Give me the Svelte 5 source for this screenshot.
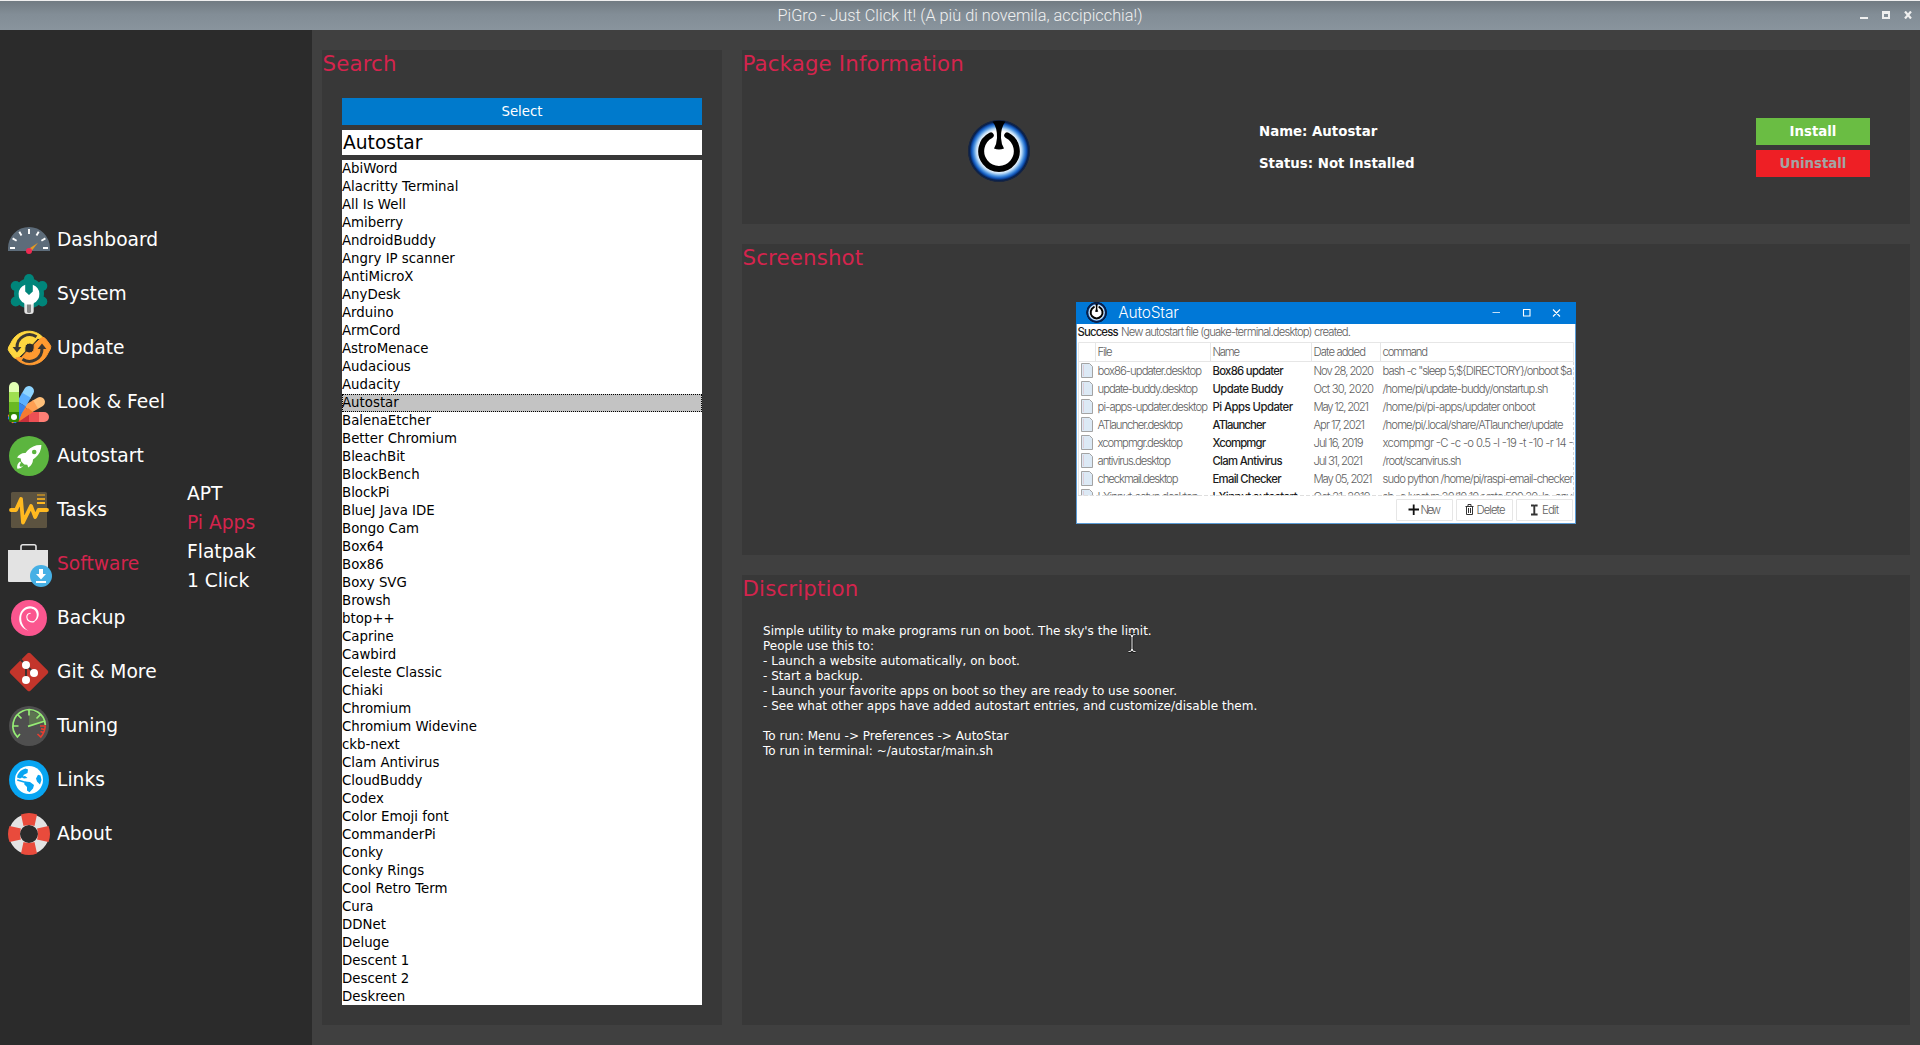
<script>
  const nav = ['Dashboard', 'System', 'Update', 'Look & Feel', 'Autostart', 'Tasks', 'Software', 'Backup', 'Git & More', 'Tuning', 'Links', 'About'];
  const sub = ['APT', 'Pi Apps', 'Flatpak', '1 Click'];
  const apps = ['AbiWord', 'Alacritty Terminal', 'All Is Well', 'Amiberry', 'AndroidBuddy', 'Angry IP scanner', 'AntiMicroX', 'AnyDesk', 'Arduino', 'ArmCord', 'AstroMenace', 'Audacious', 'Audacity', 'Autostar', 'BalenaEtcher', 'Better Chromium', 'BleachBit', 'BlockBench', 'BlockPi', 'BlueJ Java IDE', 'Bongo Cam', 'Box64', 'Box86', 'Boxy SVG', 'Browsh', 'btop++', 'Caprine', 'Cawbird', 'Celeste Classic', 'Chiaki', 'Chromium', 'Chromium Widevine', 'ckb-next', 'Clam Antivirus', 'CloudBuddy', 'Codex', 'Color Emoji font', 'CommanderPi', 'Conky', 'Conky Rings', 'Cool Retro Term', 'Cura', 'DDNet', 'Deluge', 'Descent 1', 'Descent 2', 'Deskreen'];
  const description = `Simple utility to make programs run on boot. The sky's the limit.
People use this to:
- Launch a website automatically, on boot.
- Start a backup.
- Launch your favorite apps on boot so they are ready to use sooner.
- See what other apps have added autostart entries, and customize/disable them.

To run: Menu -> Preferences -> AutoStar
To run in terminal: ~/autostar/main.sh`;

  // Each cell of the preview table: text and its drawn width.
  const rows = [
    [['box86-updater.desktop', 104.5], ['Box86 updater', 71], ['Nov 28, 2020', 60.5], ['bash -c "sleep 5;${DIRECTORY}/onboot $a', 190]],
    [['update-buddy.desktop', 100.5], ['Update Buddy', 71], ['Oct 30, 2020', 60.5], ['/home/pi/update-buddy/onstartup.sh', 166]],
    [['pi-apps-updater.desktop', 110.5], ['Pi Apps Updater', 80.5], ['May 12, 2021', 55.5], ['/home/pi/pi-apps/updater onboot', 153]],
    [['ATlauncher.desktop', 85.5], ['ATlauncher', 53.5], ['Apr 17, 2021', 51.5], ['/home/pi/.local/share/ATlauncher/update', 181]],
    [['xcompmgr.desktop', 85.5], ['Xcompmgr', 53.5], ['Jul 16, 2019', 50], ['xcompmgr -C -c -o 0.5 -l -19 -t -10 -r 14 -', 191]],
    [['antivirus.desktop', 73.5], ['Clam Antivirus', 70], ['Jul 31, 2021', 49.5], ['/root/scanvirus.sh', 79]],
    [['checkmail.desktop', 81], ['Email Checker', 69], ['May 05, 2021', 59], ['sudo python /home/pi/raspi-email-checker', 191]],
    [['LXinput-setup.desktop', 101], ['LXinput autostart', 85], ['Oct 21, 2019', 57], ["sh -c 'xset m 20/10 10 r rate 500 20; ls -any", 190]],
  ];
  const cols = [21.5, 136.5, 237.5, 306.5];
  const strips = [
    [90, '#c1272d', '#c9303a', '#ed5054', '#ff7f75'],
    [60, '#f57a30', '#f9803a', '#ff9f52', '#ffc07a'],
    [30, '#2f7fe6', '#3885ea', '#5cb0ff', '#8ed4ff'],
    [0, '#2f8500', '#6ab923', '#9fdf50', '#e2ffb4'],
  ];
</script>

{#snippet power()}
  <circle cx="32" cy="32" r="31.5" fill="url(#glow)" />
  <path d="M23.8 16.3A17.8 17.8 0 1 0 40.2 16.3" fill="none" stroke="#000" stroke-width="6" stroke-linecap="round" />
  <path d="M25.5 2.5Q32 1 38.5 2.5Q33.5 9 34 19Q34.3 25 37 29.5Q32 31.5 27 29.5Q29.7 25 30 19Q30.5 9 25.5 2.5Z" fill="#000" />
{/snippet}

{#snippet icon(name)}
  <svg class="icon" viewBox="0 0 48 48">
    {#if name === 'Dashboard'}
      <path d="M3 35v-3a21 21 0 0 1 42 0v3z" fill="#5d6c7a" />
      <path d="M24 13v5M14.3 15.8l2.2 3.8M33.7 15.8l-2.2 3.8M7.6 22.4l4 2.3M40.4 22.4l-4 2.3M5 32h5M38 32h5" stroke="#fff" stroke-width="1.9" />
      <path d="M22.8 33.5L33 26.8L25.6 36.2z" fill="#e49a22" />
      <circle cx="24" cy="35" r="3" fill="#ef2a52" />
    {:else if name === 'System'}
      <g fill="#00857a">
        <circle cx="24" cy="23.5" r="15" />
        <circle cx="24" cy="9" r="5" /><circle cx="10.7" cy="16" r="5" /><circle cx="37.3" cy="16" r="5" />
        <circle cx="10.7" cy="31.5" r="5" /><circle cx="37.3" cy="31.5" r="5" />
      </g>
      <path d="M19.3 33h9.4v8a3 3 0 0 1-3 3h-3.4a3 3 0 0 1-3-3z" fill="#e3e3e3" />
      <path d="M22 33h4v8.500a2 1.500 0 0 1-4 0z" fill="#858585" />
      <path d="M20.200 14.800V21.500l3.800 3.500l3.800-3.500V14.800A10 10 0 0 1 28.500 33.300Q28.500 34.500 27 34.500H21Q19.500 34.500 19.500 33.300A10 10 0 0 1 20.200 14.800z" fill="#fff" />
    {:else if name === 'Update'}
      {#each [['#ffd740', 0], ['#ff9a30', 180]] as u}
        <g transform="rotate({u[1]} 24.500 24)">
          <path d="M38.500 14A19.300 19.300 0 0 0 6 19L3.700 23Q2.300 25.500 4.500 28L8.500 33.300Q11 36 13.500 33.300L19.800 27.500V24A4.800 4.800 0 0 1 27.500 20L32.500 14.500z" fill={u[0]} stroke={u[0]} stroke-linejoin="round" />
          <path d="M31.500 12.800A12.500 12.500 0 0 0 12 23.500" fill="none" stroke="#3a3732" stroke-width="3" />
          <path d="M7.600 23H16.400L12 28.500z" fill="#3a3732" />
        </g>
      {/each}
    {:else if name === 'Look & Feel'}
      {#each strips as s}
        <g transform="rotate({s[0]} 9 39)">
          <path d="M4 15V9a5 5 0 0 1 10 0v6z" fill={s[4]} />
          <path d="M4 14h10v10H4z" fill={s[3]} />
          <path d="M4 24h10v10H4z" fill={s[2]} />
          <path d="M4 34h10v8a2 2 0 0 1-2 2H6a2 2 0 0 1-2-2z" fill={s[1]} />
        </g>
      {/each}
      <path d="M14 34h3l-3 9z" fill="#2f7fe6" />
      <path d="M17 35l6-5 5 4-14 9.500z" fill="#f57a30" />
      <circle cx="9" cy="39" r="3" fill="#fff" />
    {:else if name === 'Autostart'}
      <circle cx="24" cy="24" r="20" fill="#5cb53f" />
      <path d="M36.400 12.900Q28 12.500 22.300 18.800L20.500 21Q15.500 20.500 12 25.500L15.800 26.500L16.200 29.500L19.300 32.500L22.300 32.800L23.200 35.500Q28 32.500 28 27.500L30.500 25.500Q36.500 20 36.400 12.900z" fill="#fff" />
      <circle cx="29.200" cy="20" r="2.300" fill="#5cb53f" />
      <path d="M15 29.500Q11.500 32 12.200 36.600Q16 37 18.700 33.500Q16.200 35 15.200 34.600Q13.800 33.500 16 30.500z" fill="#fff" />
    {:else if name === 'Tasks'}
      <rect x="6" y="6" width="36" height="36" rx="1.500" fill="#5c5340" />
      <path d="M32 9h8" stroke="#ad822b" stroke-width="2" />
      <path d="M32 13h8" stroke="#dda226" stroke-width="2" />
      <path d="M32 17h8" stroke="#ffb820" stroke-width="2" />
      <path d="M6 24H11L16 13L18 36.500L26 20L30.200 31L33.500 24H42" fill="none" stroke="#ffb920" stroke-width="3.800" stroke-linejoin="round" stroke-linecap="round" />
    {:else if name === 'Software'}
      <path d="M16 11V6.500a1.700 1.700 0 0 1 1.700-1.700h11.600A1.700 1.700 0 0 1 31 6.500V11" fill="none" stroke="#e4e4e4" stroke-width="1.600" />
      <path d="M3 10h40v31a1 1 0 0 1-1 1H4a1 1 0 0 1-1-1z" fill="#e3e3e3" />
      <circle cx="36" cy="36" r="11" fill="#46b0e5" />
      <path d="M34 29h4v5h3l-5 5.500l-5-5.500h3zM31 41h10v2H31z" fill="#fff" />
    {:else if name === 'Backup'}
      <circle cx="24" cy="24" r="18" fill="#fb568f" />
      <path d="M23.500 36.800C16.500 34.500 13.500 29 14.300 23C15.300 16.500 19.500 12.300 25 12.300C30.500 12.300 34.300 16 33.700 21C33.200 25.500 30 28.300 26.500 28.200C29.500 27.300 32 24.500 31.700 20.500C31.300 16.500 28.500 14.500 25 14.500C20 14.500 16.500 18.500 16.200 23.500C16 29.500 19 34 23.500 36.800z" fill="#fff" />
      <path d="M29 27.600C25.500 28.600 21.700 26.500 21.800 23C21.900 20.800 23.300 19.500 25.200 19.300" fill="none" stroke="#fff" stroke-width="1.100" stroke-linecap="round" />
    {:else if name === 'Git & More'}
      <rect x="9.800" y="9.800" width="28.400" height="28.400" rx="2" fill="#c3352b" transform="rotate(45 24 24)" />
      <path d="M15 11L29 25M21 17V32" stroke="#3d302f" stroke-width="2" />
      <g fill="#fff"><circle cx="21" cy="17" r="4" /><circle cx="29" cy="25" r="4" /><circle cx="21" cy="32" r="4" /></g>
    {:else if name === 'Tuning'}
      <circle cx="24" cy="24" r="20" fill="#4f4f4f" />
      <path d="M24 24V9A16 16 0 0 1 39 19z" fill="#5c7350" />
      <g fill="none" stroke="#95ec75" stroke-width="1.700">
        <path d="M15 32L12.400 35A16.200 16.200 0 1 1 40.300 23M24 8v5.500M8 24h5.500M12.700 12.700l3.800 3.800M35.300 12.700l-3.800 3.800M23 24.400L40 19" />
      </g>
      <path d="M35 24h5.200Q40 30 35.800 35L32.500 32M39.500 27.500L36 26.800M38.500 30.500L35.500 29.500" fill="none" stroke="#e83e31" stroke-width="1.600" />
    {:else if name === 'Links'}
      <circle cx="24" cy="24" r="20" fill="#08a5f2" />
      <circle cx="24" cy="24" r="14" fill="#fff" />
      <path d="M12.500 19Q15 13.800 20.500 12.500L23 13.500L22.500 17L18.800 18.800L18 20.500L20 20L22.500 22L19 22.500L17 21.500L15 22.500L12 21.500zM20.500 25.500L25 26L29 29L28 32.500L24.500 36.300L22 34.500V31L19 28zM31 22.500L33 18.800L35.500 19.500L36.500 24L35 28.500L32 25.500z" fill="#08a5f2" />
      <path d="M12.300 24L21 26.500" stroke="#08a5f2" stroke-width="1.500" />
    {:else}
      <circle cx="24" cy="24" r="14.500" fill="none" stroke="#e3e3e3" stroke-width="11" />
      <g fill="#e94b3c">
        {#each [0, 90, 180, 270] as a}
          <path d="M16 4.500Q24 1.500 32 4.500L29.500 16Q24 14 18.500 16z" transform="rotate({a} 24 24)" />
        {/each}
      </g>
    {/if}
  </svg>
{/snippet}

<div class="window">
  <header class="titlebar">
    <span class="side"></span>
    <span class="title">PiGro - Just Click It! (A più di novemila, accipicchia!)</span>
    <span class="side controls">
      <svg width="52" height="8" viewBox="0 0 52 8">
        <path d="M0 6h8v2H0z" fill="#efefef" />
        <path fill-rule="evenodd" d="M22 0h8v8h-8zM24 3v3h4V3z" fill="#efefef" />
        <path d="M45 .5l6 7M51 .5l-6 7" stroke="#efefef" stroke-width="2.200" />
      </svg>
    </span>
  </header>

  <div class="body">
    <aside>
      <nav class="main-nav">
        {#each nav as n}
          <div class="nav-item" class:active={n === 'Software'}>{@render icon(n)}<span>{n}</span></div>
        {/each}
      </nav>
      <nav class="sub-nav">
        {#each sub as s}
          <div class="sub-item" class:active={s === 'Pi Apps'}>{s}</div>
        {/each}
      </nav>
    </aside>

    <main>
      <section class="panel search">
        <h2>Search</h2>
        <button class="select">Select</button>
        <div class="entry">Autostar</div>
        <div class="list">
          {#each apps as a}
            <div class="row" class:selected={a === 'Autostar'}>{a}</div>
          {/each}
        </div>
      </section>

      <div class="details">
        <section class="panel info">
          <h2>Package Information</h2>
          <div class="package">
            <div class="logo">
              <svg width="64" height="64" viewBox="0 0 64 64">
                <defs>
                  <radialGradient id="glow">
                    <stop offset="0.640" stop-color="#fff" /><stop offset="0.720" stop-color="#b9d9f7" />
                    <stop offset="0.800" stop-color="#4a92e0" /><stop offset="0.870" stop-color="#1054b8" />
                    <stop offset="0.930" stop-color="#062050" /><stop offset="0.980" stop-color="#102040" stop-opacity="0.700" />
                    <stop offset="1" stop-color="#203050" stop-opacity="0" />
                  </radialGradient>
                </defs>
                {@render power()}
              </svg>
            </div>
            <div class="facts"><div>Name: Autostar</div><div>Status: Not Installed</div></div>
            <div class="actions">
              <button class="install">Install</button>
              <button class="uninstall">Uninstall</button>
            </div>
          </div>
        </section>

        <section class="panel shot">
          <h2>Screenshot</h2>
          <svg class="preview" width="500" height="222" viewBox="0 0 500 222">
            <defs><clipPath id="table"><path d="M0 40h497.500v153.500H0z" /></clipPath></defs>
            <path d="M0 0h500v222H0z" fill="#5a9bd5" />
            <path d="M1 22h498v199H1z" fill="#fff" />
            <path d="M0 0h500v22H0z" fill="#0078d7" />
            <g transform="translate(9.900 -0.300) scale(0.335)">{@render power()}</g>
            <circle cx="20.600" cy="10.400" r="9.400" fill="none" stroke="#071f4a" stroke-width="1.800" />
            <text x="42.300" y="16" class="brand" textLength="60.500">AutoStar</text>
            <path d="M416.500 10.500h7.500" stroke="#c4dff6" />
            <path d="M447.500 7.500h6.500v6.500h-6.500zM477 7.500l7 7M484 7.500l-7 7" fill="none" stroke="#fff" stroke-width="1.100" />
            <text x="1.500" y="34" class="strong" textLength="41">Success</text>
            <text x="45" y="34" textLength="230">New autostart file (guake-terminal.desktop) created.</text>
            <path d="M2.500 193V40.500H497.500V59.500H2.500M19.500 40.500v19M134.500 40.500v19M235.500 40.500v19M304.500 40.500v19" fill="none" stroke="#e6e6e6" />
            <text x="21.500" y="54" textLength="15">File</text>
            <text x="136.500" y="54" textLength="27.500">Name</text>
            <text x="237.500" y="54" textLength="52.500">Date added</text>
            <text x="306.500" y="54" textLength="45.500">command</text>
            <g clip-path="url(#table)">
              {#each rows as r, i}
                <g transform="translate(0 {i * 18})">
                  <path d="M5.500 61.500h8l3 3v11h-11z" fill="#dce9f5" stroke="#a3a3a3" />
                  <path d="M7.500 63v11" stroke="#e2bcc4" stroke-width="0.600" />
                  {#each r as c, j}
                    <text x={cols[j]} y="73" class:strong={j === 1} textLength={c[1]}>{c[0]}</text>
                  {/each}
                </g>
              {/each}
            </g>
            <path d="M2 193.500h496" stroke="#dedede" stroke-dasharray="4 2" />
            <path d="M497.500 60v133" stroke="#d6d6d6" stroke-dasharray="3 2" />
            <path d="M320.500 197.500h56v21h-56zM380.500 197.500h56v21h-56zM440.500 197.500h56v21h-56z" fill="none" stroke="#e6e6e6" />
            <path d="M332.500 207.500h10.500M337.700 202.500v10.500" stroke="#111" stroke-width="1.800" />
            <text x="344.500" y="212" textLength="20.500">New</text>
            <path d="M389.500 204.500h8M392 204v-1.500h3v1.500M390.500 205v7.500h6V205M392.500 206v5M394.500 206v5" fill="none" stroke="#333" />
            <text x="400.500" y="212" textLength="29">Delete</text>
            <path d="M455 203.500h2.500l.8.700.8-.7h2.500M455 212.500h2.500l.8-.7.800.7h2.500M458.300 204v8" fill="none" stroke="#333" stroke-width="1.900" />
            <text x="466" y="212" textLength="17">Edit</text>
          </svg>
        </section>

        <section class="panel desc">
          <h2>Discription</h2>
          <div class="text">{description}</div>
          <svg class="cursor" width="10" height="20" viewBox="0 0 10 20">
            <path d="M1.500 1.500Q5 1 5 4Q5 1 8.500 1.500M5 3v14M1.500 18.500Q5 19 5 16Q5 19 8.500 18.500" fill="none" stroke="#111" stroke-width="2.600" />
            <path d="M1.500 1.500Q5 1 5 4Q5 1 8.500 1.500M5 3v14M1.500 18.500Q5 19 5 16Q5 19 8.500 18.500" fill="none" stroke="#fff" />
          </svg>
        </section>
      </div>
    </main>
  </div>
</div>

<style>
  :global(body) { margin: 0; overflow: hidden; }
  .window { display: flex; flex-direction: column; width: 1920px; height: 1045px; background: #404040; color: #fff; font-family: "DejaVu Sans", sans-serif; }
  .titlebar { display: flex; align-items: center; box-sizing: border-box; height: 30px; padding-bottom: 1px; border-top: 1px solid #efefef; background: linear-gradient(#717b82, #828d96 45%, #89949d); }
  .title { font: 300 16.300px Roboto, sans-serif; color: #f0f0f0; white-space: nowrap; }
  .side { flex: 1 1 0; box-sizing: border-box; display: flex; }
  .side:first-child { padding-left: 8px; }
  .controls { justify-content: flex-end; padding-right: 8px; }
  .body { display: flex; flex: 1; min-height: 0; }
  aside { display: flex; align-items: center; box-sizing: border-box; width: 312px; padding-bottom: 1px; background: #2b2b2b; font-size: 18.670px; }
  .main-nav { width: 187px; }
  .nav-item { display: flex; align-items: center; height: 54px; padding-left: 5px; }
  .nav-item span { margin: 0 0 1px 4px; }
  .icon { width: 48px; height: 48px; flex: none; }
  .sub-item { height: 29px; line-height: 29px; }
  .active { color: #d4244d; }
  main { display: flex; flex: 1; gap: 20px; padding: 20px 10px; }
  .panel { box-sizing: border-box; background: #383838; }
  h2 { margin: 0; padding-left: 0.500px; height: 28px; line-height: 27px; font-size: 21.330px; letter-spacing: 0.140px; font-weight: 400; color: #d4244d; }
  .search { display: flex; flex-direction: column; gap: 5px; width: 400px; padding-bottom: 20px; }
  .search h2 { height: 43px; }
  .search > :not(h2) { margin: 0 20px; }
  button { border: 0; padding: 0 0 1px; height: 27px; font: 13.330px "DejaVu Sans", sans-serif; color: #fff; }
  .select { flex: none; background: #007acc; }
  .entry { height: 25px; line-height: 25px; padding-left: 1px; background: #fff; color: #000; font-size: 18.670px; }
  .list { flex: 1; min-height: 0; overflow: hidden; background: #fff; color: #000; font-size: 13.330px; }
  .row { box-sizing: border-box; height: 18px; line-height: 17px; }
  .selected { background: #c3c3c3; outline: 1px dotted #000; outline-offset: -1px; }
  .details { display: flex; flex-direction: column; flex: 1; gap: 20px; }
  .info { height: 174px; }
  .package { display: flex; align-items: center; padding: 40px 40px 0 0; height: 59px; }
  .logo { display: flex; justify-content: center; width: 514px; padding-top: 7px; }
  .facts { flex: 1; padding-left: 3px; font-size: 13.330px; font-weight: 700; line-height: 32px; }
  .actions { display: grid; gap: 5px; width: 114px; }
  .actions button { font-weight: 700; }
  .install { background: #6abd43; }
  .uninstall { background: #ee1f25; color: #a3a3a3; }
  .shot { height: 311px; }
  .preview { display: block; margin: 30px auto 0; font: 300 11.300px Inter, sans-serif; fill: #606060; }
  .preview .strong { font-weight: 500; fill: #1c1c1c; }
  .preview .brand { font-size: 15.500px; fill: #fff; }
  .desc { position: relative; flex: 1; }
  .text { padding: 21px 0 0 21px; font-size: 12px; letter-spacing: 0.025px; line-height: 15px; white-space: pre; }
  .cursor { position: absolute; left: 385px; top: 58px; }
</style>
